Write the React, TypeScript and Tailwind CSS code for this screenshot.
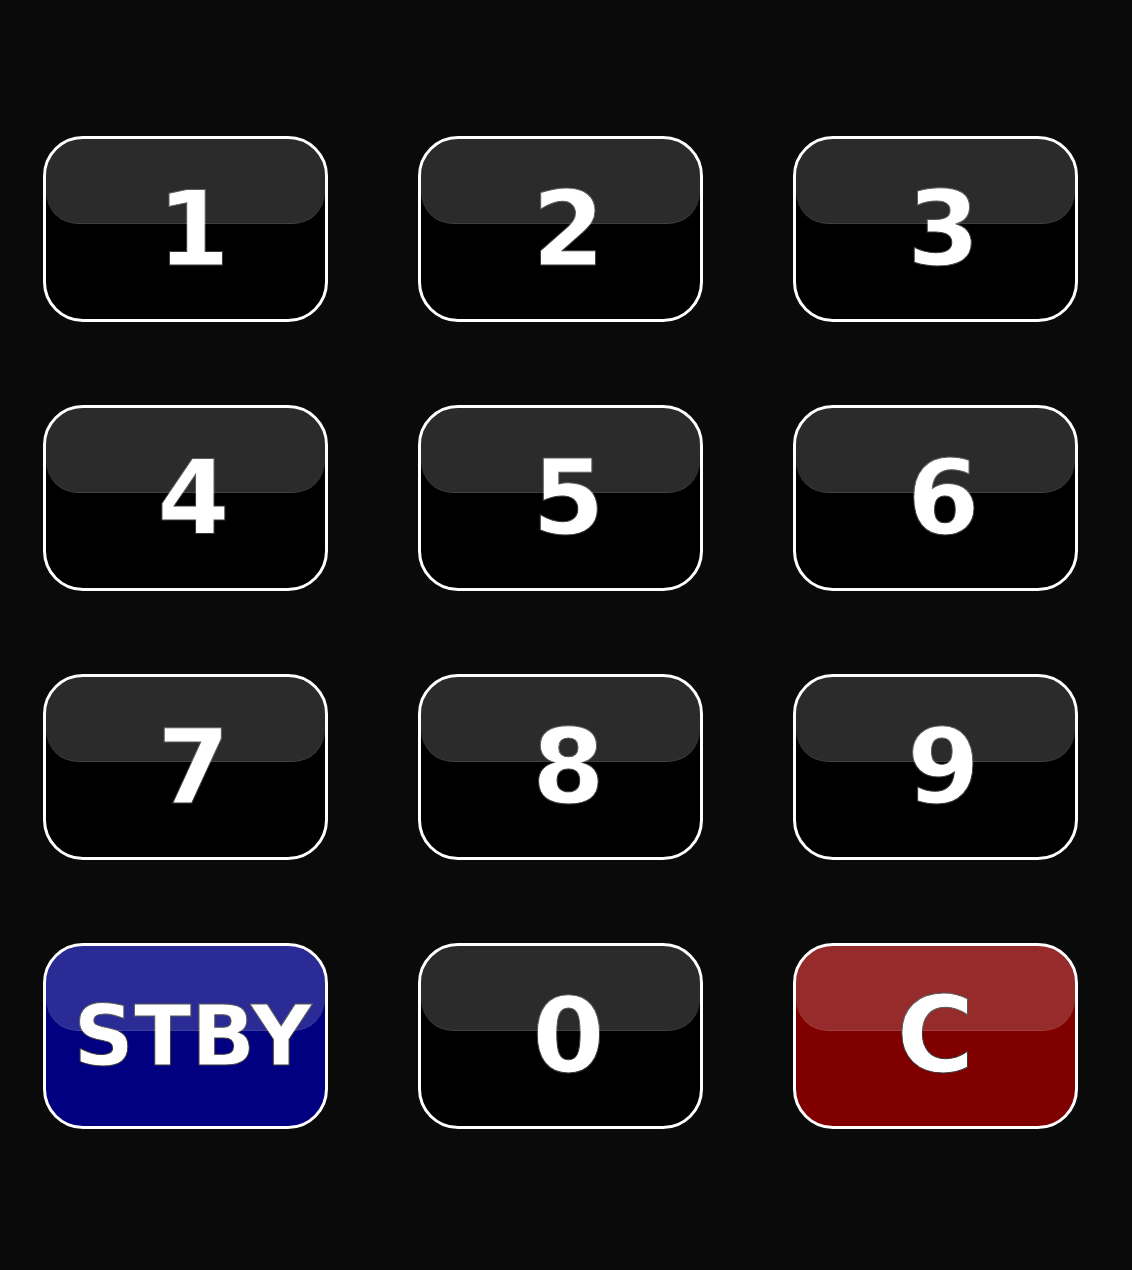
const keys = [
  { label: "1", tone: "black" },
  { label: "2", tone: "black" },
  { label: "3", tone: "black" },
  { label: "4", tone: "black" },
  { label: "5", tone: "black" },
  { label: "6", tone: "black" },
  { label: "7", tone: "black" },
  { label: "8", tone: "black" },
  { label: "9", tone: "black" },
  { label: "STBY", tone: "blue" },
  { label: "0", tone: "black" },
  { label: "C", tone: "red" },
];

const toneClass: Record<string, string> = {
  black: "bg-black",
  blue: "bg-[#000080]",
  red: "bg-[#800000]",
};

function Key({ label, tone }: { label: string; tone: string }) {
  const size =
    label === "STBY"
      ? "text-[84px] pl-[14px]"
      : label === "C"
      ? "text-[106px]"
      : "text-[104px] pl-[16px]";
  return (
    <button
      className={`relative h-[186px] w-[285px] overflow-hidden rounded-[40px] border-[3px] border-white ${toneClass[tone]} flex items-center justify-center`}
    >
      <span
        className={`font-['DejaVu_Sans',sans-serif] font-bold leading-none text-white [-webkit-text-stroke:1px_#3a3a3a] ${size}`}
      >
        {label}
      </span>
      <div className="absolute left-0 right-0 top-0 h-[85px] rounded-t-[36px] rounded-b-[32px] border-b border-white/10 bg-white/[0.17]" />
    </button>
  );
}

export default function App() {
  return (
    <div className="h-[1270px] w-full bg-[#0a0a0a] pl-[43px] pt-[136px]">
      <div className="grid grid-cols-[285px_285px_285px] gap-x-[90px] gap-y-[83px]">
        {keys.map((k) => (
          <Key key={k.label} label={k.label} tone={k.tone} />
        ))}
      </div>
    </div>
  );
}
